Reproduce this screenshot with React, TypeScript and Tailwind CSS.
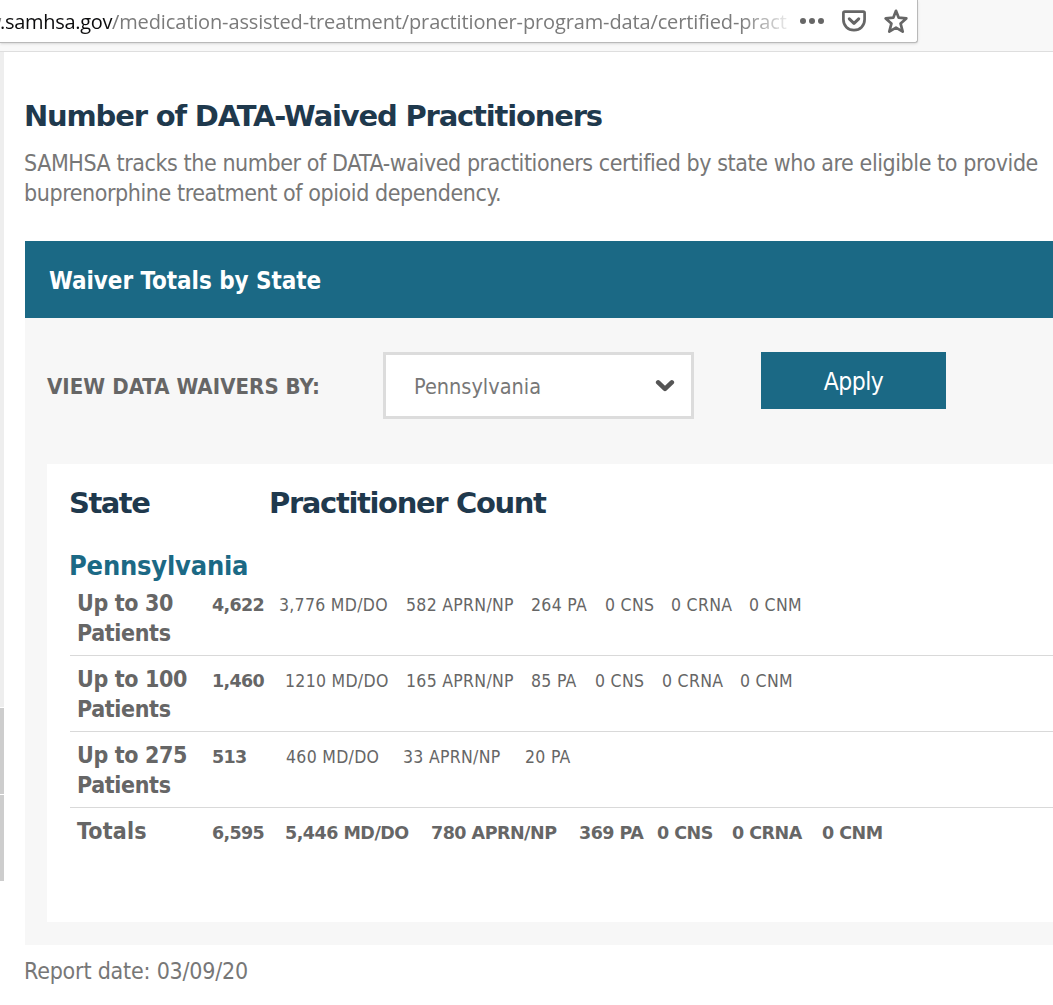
type Cell = { text: string; w: string };
type Row = { label: string[]; total: string; cells: Cell[]; bold?: boolean };

const rows: Row[] = [
  {
    label: ["Up to 30", "Patients"],
    total: "4,622",
    cells: [
      { text: "3,776 MD/DO", w: "ml-[67px] w-[127px]" },
      { text: "582 APRN/NP", w: "w-[125px]" },
      { text: "264 PA", w: "w-[74px]" },
      { text: "0 CNS", w: "w-[66px]" },
      { text: "0 CRNA", w: "w-[78px]" },
      { text: "0 CNM", w: "w-[80px]" },
    ],
  },
  {
    label: ["Up to 100", "Patients"],
    total: "1,460",
    cells: [
      { text: "1210 MD/DO", w: "ml-[73px] w-[121px]" },
      { text: "165 APRN/NP", w: "w-[125px]" },
      { text: "85 PA", w: "w-[64px]" },
      { text: "0 CNS", w: "w-[67px]" },
      { text: "0 CRNA", w: "w-[78px]" },
      { text: "0 CNM", w: "w-[80px]" },
    ],
  },
  {
    label: ["Up to 275", "Patients"],
    total: "513",
    cells: [
      { text: "460 MD/DO", w: "ml-[74px] w-[117px]" },
      { text: "33 APRN/NP", w: "w-[122px]" },
      { text: "20 PA", w: "w-[64px]" },
    ],
  },
  {
    label: ["Totals"],
    total: "6,595",
    bold: true,
    cells: [
      { text: "5,446 MD/DO", w: "ml-[73px] w-[146px]" },
      { text: "780 APRN/NP", w: "w-[148px]" },
      { text: "369 PA", w: "w-[78px]" },
      { text: "0 CNS", w: "w-[75px]" },
      { text: "0 CRNA", w: "w-[90px]" },
      { text: "0 CNM", w: "w-[80px]" },
    ],
  },
];

function UrlBar() {
  return (
    <div className="h-[52px] shrink-0 border-b border-[#dedede] bg-[#f8f8f8]">
      <div className="flex h-[43px] w-[918px] items-center rounded-br-[3px] border-r border-b border-[#b9b9b9] bg-white shadow-sm">
        <div className="flex h-[42px] w-[788px] justify-start overflow-hidden font-['Open_Sans',sans-serif] text-[20px] leading-[43px] whitespace-nowrap [mask-image:linear-gradient(to_right,black_740px,transparent_796px)]">
          <span className="-ml-[14px] w-[14px] shrink-0 text-[#777]">w</span>
          <span className="w-[112px] shrink-0 tracking-[-0.3px] text-[#0c0c0d]">.samhsa.gov</span>
          <span className="tracking-[-0.13px] text-[#7b7b7b]">
            /medication-assisted-treatment/practitioner-program-data/certified-pract
          </span>
        </div>
        <svg className="ml-[12px] h-[24px] w-[24px] shrink-0" viewBox="0 0 24 24" fill="#666">
          <circle cx="3" cy="12" r="3" />
          <circle cx="12" cy="12" r="3" />
          <circle cx="21" cy="12" r="3" />
        </svg>
        <svg
          className="ml-[18px] h-[24px] w-[24px] shrink-0"
          viewBox="0 0 24 24"
          fill="none"
          stroke="#666"
          strokeWidth="2.7"
          strokeLinecap="round"
          strokeLinejoin="round"
        >
          <path d="M2.8 2.6H21.2Q22.6 2.6 22.6 4V10.6C22.6 17 18 21.2 12 21.2S1.4 17 1.4 10.6V4Q1.4 2.6 2.8 2.6Z" />
          <path d="M7.3 9.8L12 14.3L16.7 9.8" strokeWidth="3" />
        </svg>
        <svg
          className="ml-[18px] h-[24px] w-[24px] shrink-0"
          viewBox="0 0 24 24"
          fill="none"
          stroke="#666"
          strokeWidth="2.7"
          strokeLinejoin="round"
        >
          <path d="M12 1.8L14.7 8.7L22.3 9.4L16.6 14.6L18.7 22.6L12 18.7L5.3 22.6L7.4 14.6L1.7 9.4L9.3 8.7Z" />
        </svg>
      </div>
    </div>
  );
}

function TableRow({ row }: { row: Row }) {
  return (
    <div
      className={
        row.bold
          ? "flex items-baseline pt-[8px] pl-[7px]"
          : "flex h-[76px] items-baseline border-b border-[#d9d9d9] pt-[8px] pl-[7px]"
      }
    >
      <div className="w-[135px] shrink-0 text-[23px] leading-[30px] font-bold tracking-[-0.36px]">
        {row.label.map((l) => (
          <div key={l} className={l === "Totals" ? "tracking-[0.2px]" : ""}>
            {l}
          </div>
        ))}
      </div>
      <div className="w-0 font-['DejaVu_Sans',sans-serif] text-[17.5px] font-bold tracking-[-0.7px] whitespace-nowrap">
        {row.total}
      </div>
      <div
        className={
          row.bold
            ? "flex font-['DejaVu_Sans',sans-serif] text-[17.5px] font-bold tracking-[-0.5px] whitespace-nowrap"
            : "flex text-[17.5px] tracking-[0.3px] whitespace-nowrap"
        }
      >
        {row.cells.map((c) => (
          <span key={c.text} className={`${c.w} block shrink-0`}>
            {c.text}
          </span>
        ))}
      </div>
    </div>
  );
}

export default function App() {
  return (
    <div className="flex h-[1005px] w-[1053px] flex-col overflow-hidden bg-white font-['DejaVu_Sans_Condensed','DejaVu_Sans',sans-serif] text-[#666]">
      <UrlBar />
      <div className="flex min-h-0 flex-1">
        <div className="flex w-[4px] shrink-0 flex-col gap-px">
          <div className="h-[655px] bg-[#eee]" />
          <div className="h-[86px] bg-[#cdcdcd]" />
          <div className="h-[86px] bg-[#cdcdcd]" />
        </div>
        <main className="ml-[21px] w-[1028px] shrink-0 pt-[46px]">
          <h1 className="-ml-px font-['DejaVu_Sans',sans-serif] text-[29px] leading-[36px] font-bold tracking-[-1.18px] whitespace-nowrap text-[#1f394d]">
            Number of DATA-Waived Practitioners
          </h1>
          <p className="-ml-px mt-[14px] text-[23px] leading-[30px] tracking-[-0.42px] whitespace-nowrap text-[#777]">
            SAMHSA tracks the number of DATA-waived practitioners certified by state who are eligible to provide
            <br />
            buprenorphine treatment of opioid dependency.
          </p>
          <section className="mt-[33px] h-[704px] bg-[#f7f7f7]">
            <h2 className="h-[77px] bg-[#1b6985] pt-px pl-[24px] text-[24px] leading-[79px] font-bold tracking-[-0.05px] text-white">
              Waiver Totals by State
            </h2>
            <div className="flex h-[146px] items-start pt-[34px] pl-[22px]">
              <label className="w-[336px] pt-px text-[22px] leading-[68px] font-bold tracking-[0.05px]">
                VIEW DATA WAIVERS BY:
              </label>
              <div className="flex h-[67px] w-[311px] items-center justify-between border-[3px] border-[#dcdcdc] bg-white pr-[16px] pl-[28px] text-[21.5px] leading-[61px] text-[#777]">
                <span className="pt-[2px]">Pennsylvania</span>
                <svg
                  className="h-[14px] w-[20px]"
                  viewBox="0 0 20 14"
                  fill="none"
                  stroke="#555"
                  strokeWidth="4.6"
                  strokeLinecap="round"
                  strokeLinejoin="round"
                >
                  <path d="M3.2 3.4L10 9.8L16.8 3.4" />
                </svg>
              </div>
              <button className="ml-[67px] h-[57px] w-[185px] bg-[#1b6985] pt-[2px] text-[24.5px] leading-[55px] tracking-[-0.5px] text-white">
                Apply
              </button>
            </div>
            <div className="ml-[22px] h-[458px] bg-white pt-[20px] pl-[23px]">
              <div className="flex font-['DejaVu_Sans',sans-serif] text-[29px] leading-[38px] font-bold text-[#1f394d]">
                <div className="-ml-px w-[200px] tracking-[-1.5px]">State</div>
                <div className="tracking-[-1.35px]">Practitioner Count</div>
              </div>
              <h3 className="-ml-px mt-[29px] h-[29px] text-[27px] leading-[30px] font-bold tracking-[-0.2px] text-[#1b6985]">
                Pennsylvania
              </h3>
              {rows.map((r) => (
                <TableRow key={r.total} row={r} />
              ))}
            </div>
          </section>
          <p className="-ml-px mt-[11px] text-[23px] leading-[30px] tracking-[-0.2px] text-[#777]">
            Report date: 03/09/20
          </p>
        </main>
      </div>
    </div>
  );
}
